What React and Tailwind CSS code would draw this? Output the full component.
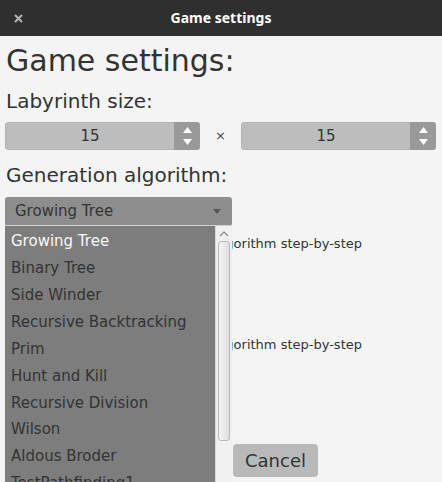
import React from "react";

const items = [
  "Growing Tree",
  "Binary Tree",
  "Side Winder",
  "Recursive Backtracking",
  "Prim",
  "Hunt and Kill",
  "Recursive Division",
  "Wilson",
  "Aldous Broder",
  "TestPathfinding1",
];

function Spinner() {
  return (
    <div className="flex h-[28px] w-[195px] rounded-[3px] overflow-hidden">
      <div className="flex-1 bg-[#bdbdbd] flex items-center justify-center text-[15px] text-[#333] border border-r-0 border-[#b2b2b2] rounded-l-[3px]">
        15
      </div>
      <div className="w-[26px] bg-[#999999] flex flex-col items-center justify-center gap-[6px]">
        <svg width="9" height="6" viewBox="0 0 9 6"><polygon points="4.5,0 9,6 0,6" fill="#fff" /></svg>
        <svg width="9" height="6" viewBox="0 0 9 6"><polygon points="0,0 9,0 4.5,6" fill="#fff" /></svg>
      </div>
    </div>
  );
}

export default function App() {
  return (
    <div className="relative w-[442px] h-[482px] overflow-hidden bg-[#f4f4f4] text-[#333] font-['DejaVu_Sans',sans-serif]">
      {/* Title bar */}
      <div className="relative h-[36px] bg-[#2f2f2f] flex items-center justify-center">
        <svg className="absolute left-[14px] top-[14px]" width="9" height="9" viewBox="0 0 9 9">
          <path d="M1 1L8 8M8 1L1 8" stroke="#b0b0b0" strokeWidth="2.2" />
        </svg>
        <span className="text-white font-bold text-[14px] font-['Noto_Sans',sans-serif] leading-none">Game settings</span>
      </div>

      <div className="px-[5px]">
        <div className="mt-[7px] pl-[1px] text-[30px] leading-[36px]">Game settings:</div>
        <div className="mt-[10px] pl-[1px] text-[20px] leading-[24px]">Labyrinth size:</div>
        <div className="mt-[9px] flex items-center">
          <Spinner />
          <div className="w-[41px] text-center text-[13px] text-[#444]">×</div>
          <Spinner />
        </div>
        <div className="mt-[13px] pl-[1px] text-[20px] leading-[24px]">Generation algorithm:</div>
        <div className="mt-[10px] w-[227px] h-[29px] rounded-[3px] bg-[#8e8e8e] flex items-center justify-between pl-[10px] pr-[11px] text-[15px]">
          <span>Growing Tree</span>
          <svg width="8" height="5" viewBox="0 0 8 5"><polygon points="0,0 8,0 4,5" fill="#555" /></svg>
        </div>
        <div className="mt-[10px] w-[357px] text-right text-[13px] leading-[16px] whitespace-nowrap">
          Animate generation algorithm step-by-step
        </div>
        <div className="mt-[10px] pl-[1px] text-[20px] leading-[24px]">Pathfinding algorithm:</div>
        <div className="mt-[10px] w-[227px] h-[29px] rounded-[3px] bg-[#8e8e8e]" />
        <div className="mt-[12px] w-[357px] text-right text-[13px] leading-[16px] whitespace-nowrap">
          Animate pathfinding algorithm step-by-step
        </div>
        <div className="mt-[91px] flex gap-[5px]">
          <div className="w-[223px] h-[33px] rounded-[4px] bg-[#b9b9b9]" />
          <div className="w-[85px] h-[33px] rounded-[4px] bg-[#b9b9b9] flex items-center justify-center text-[18px]">
            Cancel
          </div>
        </div>
      </div>

      {/* Dropdown popup */}
      <div className="absolute left-[5px] top-[225px] w-[227px] h-[260px] flex border-t border-[#d0d0d0]">
        <div className="w-[210px] bg-[#7d7d7d] flex flex-col pt-[2px]">
          {items.map((it, i) => (
            <div
              key={it}
              className={`h-[26.9px] shrink-0 flex items-center pl-[6px] text-[15px] ${i === 0 ? "text-[#f8f8f8]" : "text-[#333]"}`}
            >
              {it}
            </div>
          ))}
        </div>
        <div className="w-[17px] bg-[#f0f0f0] border-l border-[#d8d8d8] flex flex-col items-center">
          <svg className="mt-[4px]" width="10" height="7" viewBox="0 0 10 7">
            <path d="M1 6L5 2L9 6" stroke="#888" strokeWidth="1.2" fill="none" />
          </svg>
          <div className="mt-[4px] w-[12px] h-[200px] rounded-[3px] border border-[#b8b8b8] bg-gradient-to-r from-[#f4f4f4] to-[#dedede]" />
        </div>
      </div>
    </div>
  );
}
